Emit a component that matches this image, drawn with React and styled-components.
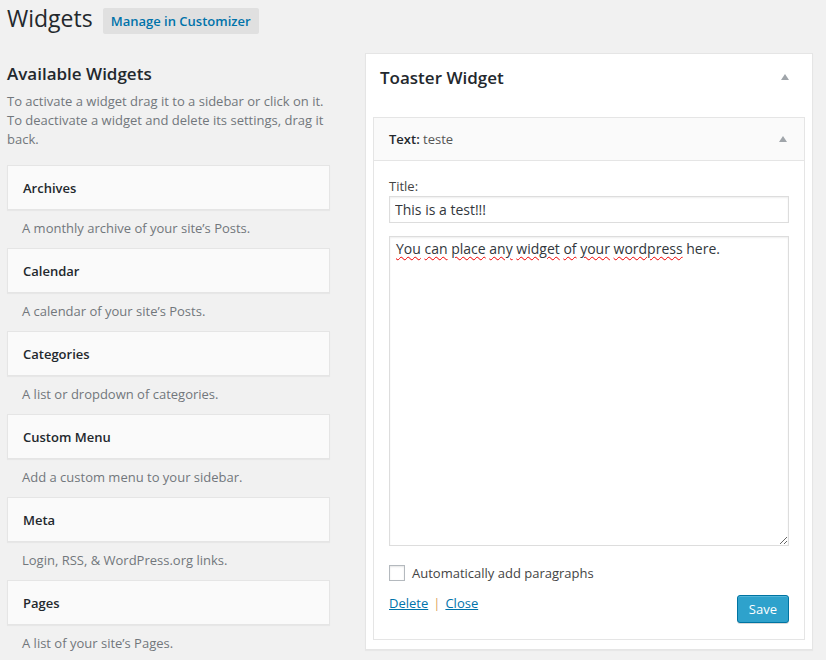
import React from 'react';
import styled, { createGlobalStyle } from 'styled-components';

const GlobalStyle = createGlobalStyle`
  html, body {
    margin: 0;
    padding: 0;
    background: #f1f1f1;
    font-family: 'Open Sans', 'Noto Sans', sans-serif;
    color: #444;
    font-size: 13px;
    overflow: hidden;
  }
  * { box-sizing: border-box; }
`;

const Page = styled.div`
  padding: 4px 13px 0 7px;
`;

const Header = styled.div`
  display: flex;
  align-items: flex-start;
  gap: 10px;
`;

const PageTitle = styled.h1`
  margin: 0;
  font-size: 23px;
  font-weight: 400;
  line-height: 29px;
  color: #23282d;
`;

const HeaderButton = styled.a`
  margin-top: 4px;
  height: 26px;
  padding: 0 8px;
  display: inline-flex;
  align-items: center;
  background: #e0e0e0;
  color: #0073aa;
  font-size: 13px;
  font-weight: 600;
  text-decoration: none;
  border-radius: 2px;
`;

const Columns = styled.div`
  display: flex;
  align-items: flex-start;
  gap: 35px;
  margin-top: 19px;
`;

const LeftColumn = styled.div`
  width: 323px;
  flex-shrink: 0;
`;

const SectionTitle = styled.h3`
  margin: 10px 0 0;
  font-size: 17px;
  font-weight: 600;
  line-height: 22px;
  color: #23282d;
`;

const Intro = styled.p`
  margin: 7px 0 16px;
  line-height: 19px;
  color: #72777c;
`;

const WidgetCard = styled.div`
  height: 45px;
  padding: 0 15px;
  display: flex;
  align-items: center;
  background: #fafafa;
  border: 1px solid #e5e5e5;
  box-shadow: 0 1px 1px rgba(0, 0, 0, 0.04);
  font-weight: 600;
  color: #23282d;
`;

const WidgetDesc = styled.div`
  padding: 9px 15px 10px;
  line-height: 19px;
  color: #72777c;
`;

const Sidebar = styled.div`
  flex: 1;
  background: #fff;
  border: 1px solid #e5e5e5;
  box-shadow: 0 1px 1px rgba(0, 0, 0, 0.04);
  padding: 0 7px 9px;
`;

const SidebarHead = styled.div`
  height: 63px;
  padding: 11px 16px 0 7px;
  display: flex;
  justify-content: space-between;
  align-items: flex-start;
`;

const SidebarTitle = styled.h2`
  margin: 0;
  font-size: 17px;
  font-weight: 600;
  line-height: 26px;
  color: #23282d;
`;

const Arrow = styled.span`
  margin-top: ${p => p.$top || 0}px;
  width: 0;
  height: 0;
  border-left: 4px solid transparent;
  border-right: 4px solid transparent;
  border-bottom: 6px solid #a0a5aa;
`;

const InnerWidget = styled.div`
  border: 1px solid #e5e5e5;
  background: #fff;
`;

const InnerHead = styled.div`
  height: 43px;
  padding: 0 17px 0 15px;
  display: flex;
  justify-content: space-between;
  align-items: center;
  background: #fafafa;
  border-bottom: 1px solid #e5e5e5;
  color: #23282d;
`;

const InnerTitle = styled.span`
  font-weight: 600;
  span {
    font-weight: 400;
    color: #555;
  }
`;

const InnerBody = styled.div`
  padding: 16px 15px 16px;
`;

const Label = styled.label`
  display: block;
  line-height: 19px;
  color: #444;
`;

const TextInput = styled.input`
  display: block;
  width: 100%;
  height: 27px;
  margin: 0;
  padding: 0 5px;
  border: 1px solid #ddd;
  box-shadow: inset 0 1px 2px rgba(0, 0, 0, 0.07);
  font-family: inherit;
  font-size: 14px;
  color: #32373c;
  outline: none;
`;

const TextBox = styled.div`
  margin-top: 13px;
  height: 310px;
  padding: 2px 6px;
  border: 1px solid #ddd;
  box-shadow: inset 0 1px 2px rgba(0, 0, 0, 0.07);
  font-size: 14px;
  line-height: 20px;
  color: #32373c;
  overflow: auto;
  resize: both;
`;

const Misspelled = styled.span`
  text-decoration: underline wavy #e00;
  text-decoration-thickness: 1px;
  text-underline-offset: 2px;
`;

const CheckRow = styled.label`
  margin-top: 19px;
  display: flex;
  align-items: center;
  gap: 7px;
  line-height: 16px;
  color: #444;
`;

const CheckBox = styled.span`
  width: 16px;
  height: 16px;
  border: 1px solid #b4b9be;
  background: #fff;
  box-shadow: inset 0 1px 2px rgba(0, 0, 0, 0.1);
`;

const Actions = styled.div`
  margin-top: 14px;
  display: flex;
  justify-content: space-between;
  align-items: flex-start;
`;

const Links = styled.div`
  margin-top: -1px;
  line-height: 18px;
`;

const ActionLink = styled.a`
  color: #0073aa;
  text-decoration: underline;
`;

const Sep = styled.span`
  margin: 0 5px;
  color: #dba45a;
`;

const SaveButton = styled.button`
  height: 28px;
  padding: 0 11px;
  background: #2ea2cc;
  border: 1px solid #0074a2;
  border-radius: 3px;
  box-shadow: inset 0 1px 0 rgba(120, 200, 230, 0.5), 0 1px 0 rgba(0, 0, 0, 0.15);
  color: #fff;
  font-family: inherit;
  font-size: 13px;
`;

const widgets = [
  { name: 'Archives', desc: 'A monthly archive of your site’s Posts.' },
  { name: 'Calendar', desc: 'A calendar of your site’s Posts.' },
  { name: 'Categories', desc: 'A list or dropdown of categories.' },
  { name: 'Custom Menu', desc: 'Add a custom menu to your sidebar.' },
  { name: 'Meta', desc: 'Login, RSS, & WordPress.org links.' },
  { name: 'Pages', desc: 'A list of your site’s Pages.' },
];

const misspelled = ['You', 'can', 'place', 'any', 'widget', 'of', 'your', 'wordpress'];

export default function App() {
  return (
    <>
      <GlobalStyle />
      <Page>
        <Header>
          <PageTitle>Widgets</PageTitle>
          <HeaderButton href="#">Manage in Customizer</HeaderButton>
        </Header>
        <Columns>
          <LeftColumn>
            <SectionTitle>Available Widgets</SectionTitle>
            <Intro>
              To activate a widget drag it to a sidebar or click on it. To deactivate a widget and delete its settings, drag it back.
            </Intro>
            {widgets.map(w => (
              <div key={w.name}>
                <WidgetCard>{w.name}</WidgetCard>
                <WidgetDesc>{w.desc}</WidgetDesc>
              </div>
            ))}
          </LeftColumn>
          <Sidebar>
            <SidebarHead>
              <SidebarTitle>Toaster Widget</SidebarTitle>
              <Arrow $top={9} />
            </SidebarHead>
            <InnerWidget>
              <InnerHead>
                <InnerTitle>Text: <span>teste</span></InnerTitle>
                <Arrow />
              </InnerHead>
              <InnerBody>
                <Label>Title:</Label>
                <TextInput defaultValue="This is a test!!!" />
                <TextBox role="textbox">
                  {misspelled.map(word => (
                    <React.Fragment key={word}>
                      <Misspelled>{word}</Misspelled>{' '}
                    </React.Fragment>
                  ))}
                  here.
                </TextBox>
                <CheckRow>
                  <CheckBox />
                  Automatically add paragraphs
                </CheckRow>
                <Actions>
                  <Links>
                    <ActionLink href="#">Delete</ActionLink>
                    <Sep>|</Sep>
                    <ActionLink href="#">Close</ActionLink>
                  </Links>
                  <SaveButton>Save</SaveButton>
                </Actions>
              </InnerBody>
            </InnerWidget>
          </Sidebar>
        </Columns>
      </Page>
    </>
  );
}
